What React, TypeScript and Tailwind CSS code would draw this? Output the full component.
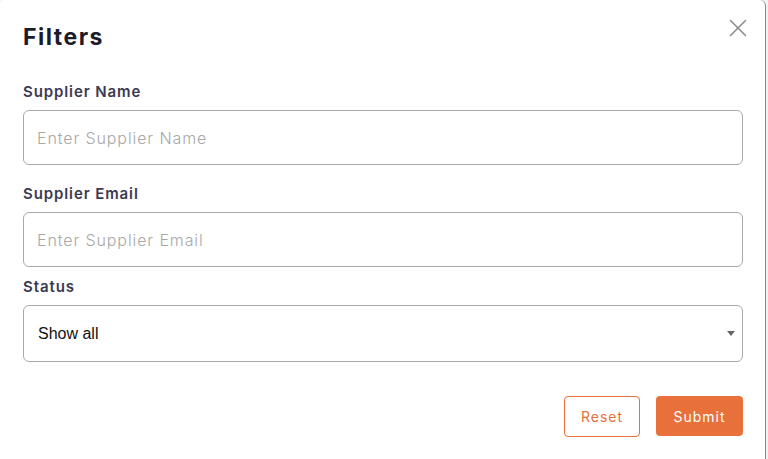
import { X } from "lucide-react";

const labelCls = "block text-[15px] font-semibold text-[#3b3953] leading-none tracking-[0.9px]";
const inputCls =
  "w-full h-[55px] rounded-[6px] border border-[#a9a9a9] bg-white px-[13px] text-[16px] font-light tracking-[0.9px] text-[#333] placeholder:text-[#a8a8a8] outline-none";

export default function App() {
  return (
    <div className="w-[768px] h-[459px] bg-[#f2f2f2] overflow-hidden" style={{ fontFamily: "Inter, 'Noto Sans', sans-serif" }}>
      <div className="relative w-[766px] h-[470px] bg-white border-r border-[#8a8a8a] rounded-tr-[6px] rounded-tl-[4px] pl-[23px] pr-[22px] pt-[23px]">
        <button className="absolute right-[12px] top-[13px] text-[#8a8a8a]">
          <X className="w-[30px] h-[30px]" strokeWidth={1.2} />
        </button>

        <h2 className="text-[23px] font-bold text-[#1b1b2b] leading-[28px] tracking-[1.5px]">Filters</h2>

        <div className="mt-[33px]">
          <label className={labelCls}>Supplier Name</label>
          <input className={`${inputCls} mt-[11px]`} placeholder="Enter Supplier Name" />
        </div>

        <div className="mt-[21px]">
          <label className={labelCls}>Supplier Email</label>
          <input className={`${inputCls} mt-[11px]`} placeholder="Enter Supplier Email" />
        </div>

        <div className="mt-[12px]">
          <label className={labelCls}>Status</label>
          <div className="relative mt-[11px]">
            <select
              className="w-full h-[57px] appearance-none rounded-[6px] border border-[#a9a9a9] bg-white px-[14px] text-[16px] text-[#111] outline-none"
              style={{ fontFamily: "'Liberation Sans', Arial, sans-serif" }}
              defaultValue="all"
            >
              <option value="all">Show all</option>
              <option value="active">Active</option>
              <option value="inactive">Inactive</option>
            </select>
            <span className="pointer-events-none absolute right-[8px] top-[26px] w-0 h-0 border-l-[4.5px] border-r-[4.5px] border-t-[5px] border-l-transparent border-r-transparent border-t-[#666]" />
          </div>
        </div>

        <div className="mt-[34px] flex justify-end gap-[16px]">
          <button className="w-[76px] h-[41px] rounded-[4px] border border-[#e8703a] bg-white text-[14px] tracking-[1px] text-[#e8703a]">
            Reset
          </button>
          <button className="w-[87px] h-[40px] rounded-[4px] bg-[#e8703a] text-[14px] tracking-[1px] text-white">
            Submit
          </button>
        </div>
      </div>
    </div>
  );
}
